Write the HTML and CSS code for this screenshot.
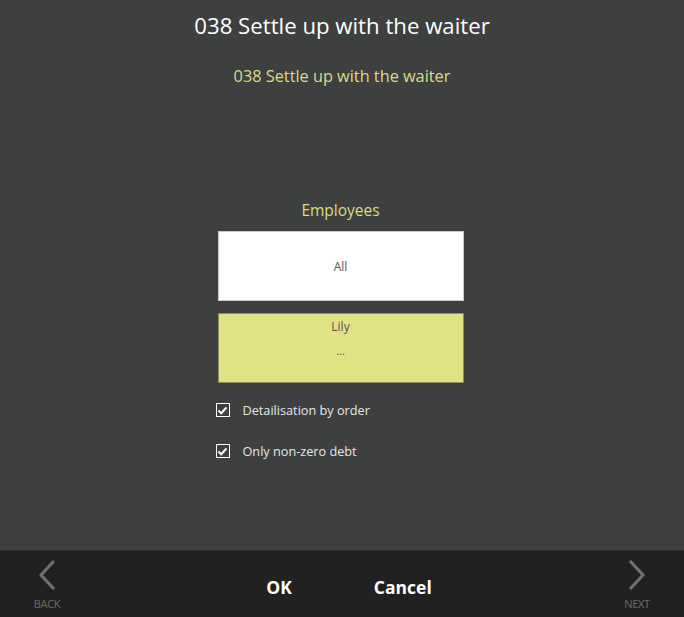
FILE: index.html
```html
<!DOCTYPE html>
<html lang="en">
<head>
  <meta charset="UTF-8" />
  <title>038 Settle up with the waiter</title>
  <link rel="stylesheet" href="styles.css">
</head>
<body>
  <div class="screen">
    <div class="main">
      <h1 class="title">038 Settle up with the waiter</h1>
      <p class="subtitle">038 Settle up with the waiter</p>

      <div class="panel">
        <div class="group-label">Employees</div>
        <div class="choice choice-all">All</div>
        <div class="choice choice-selected">
          <span>Lily</span>
          <span class="dots">...</span>
        </div>

        <label class="check">
          <span class="box"><svg width="11" height="9" viewBox="0 0 11 9"><path d="M1.5 4.5 L4.2 7.2 L9.5 1.5" fill="none" stroke="#fff" stroke-width="2"/></svg></span>
          Detailisation by order
        </label>
        <label class="check">
          <span class="box"><svg width="11" height="9" viewBox="0 0 11 9"><path d="M1.5 4.5 L4.2 7.2 L9.5 1.5" fill="none" stroke="#fff" stroke-width="2"/></svg></span>
          Only non-zero debt
        </label>
      </div>
    </div>

    <div class="footer">
      <div class="nav nav-back">
        <svg width="20" height="30" viewBox="0 0 20 30"><path d="M16 2 L4 15 L16 28" fill="none" stroke="#707070" stroke-width="3.2" stroke-linecap="round" stroke-linejoin="round"/></svg>
        <span>BACK</span>
      </div>
      <div class="actions">
        <button class="btn">OK</button>
        <button class="btn">Cancel</button>
      </div>
      <div class="nav nav-next">
        <svg width="20" height="30" viewBox="0 0 20 30"><path d="M4 2 L16 15 L4 28" fill="none" stroke="#707070" stroke-width="3.2" stroke-linecap="round" stroke-linejoin="round"/></svg>
        <span>NEXT</span>
      </div>
    </div>
  </div>
</body>
</html>
```

FILE: styles.css
```css
:root {
  --bg: #3e4040;
  --footer: #212121;
  --accent: #dcdc80;
  --selected: #e0e283;
  --font: 'Open Sans', 'Noto Sans', sans-serif;
}
* {
  box-sizing: border-box;
}
body {
  margin: 0;
  background: var(--bg);
  font-family: var(--font);
  color: #fff;
}
.screen {
  height: 617px;
  display: flex;
  flex-direction: column;
}
.main {
  flex: 1;
  display: flex;
  flex-direction: column;
  align-items: center;
}
.title {
  margin: 11px 0 0;
  font-size: 22.2px;
  font-weight: 400;
  line-height: 30px;
}
.subtitle {
  margin: 24px 0 0;
  font-size: 16.3px;
  line-height: 22px;
  color: var(--accent);
}
.panel {
  margin-top: 112px;
  margin-right: 3px;
  width: 246px;
  display: flex;
  flex-direction: column;
}
.group-label {
  text-align: center;
  color: var(--accent);
  font-size: 15.5px;
  line-height: 22px;
}
.choice {
  height: 70px;
  margin-top: 10px;
  display: flex;
  flex-direction: column;
  align-items: center;
  font-size: 12px;
  color: #555;
}
.choice-all {
  background: #fff;
  border: 1px solid #c8c8c8;
  justify-content: center;
}
.choice-selected {
  margin-top: 12px;
  background: var(--selected);
  border: 1px solid #8c8c5c;
  padding-top: 4px;
  gap: 8px;
  color: #555;
}
.choice-selected .dots {
  font-size: 11px;
}
.check {
  display: flex;
  align-items: center;
  gap: 13px;
  font-size: 12.7px;
  color: #e6e6e6;
  height: 20px;
  margin-top: 17px;
  margin-left: -2px;
}
.check + .check {
  margin-top: 21px;
}
.box {
  width: 14px;
  height: 14px;
  border: 1px solid #fff;
  display: flex;
  align-items: center;
  justify-content: center;
}
.footer {
  height: 67px;
  background: var(--footer);
  border-top: 1px solid #2b2b2b;
  display: grid;
  grid-template-columns: 94px 1fr 94px;
  align-items: center;
}
.nav {
  display: flex;
  flex-direction: column;
  align-items: center;
  gap: 6px;
  padding-top: 2px;
  color: #6a6a6a;
  font-size: 11px;
  letter-spacing: -0.3px;
}
.actions {
  display: flex;
  justify-content: center;
  gap: 82px;
  padding-top: 6px;
  padding-left: 14px;
}
.btn {
  background: none;
  border: none;
  color: #fff;
  font-family: var(--font);
  font-weight: 700;
  font-size: 17.5px;
  padding: 0;
  cursor: pointer;
}
```
